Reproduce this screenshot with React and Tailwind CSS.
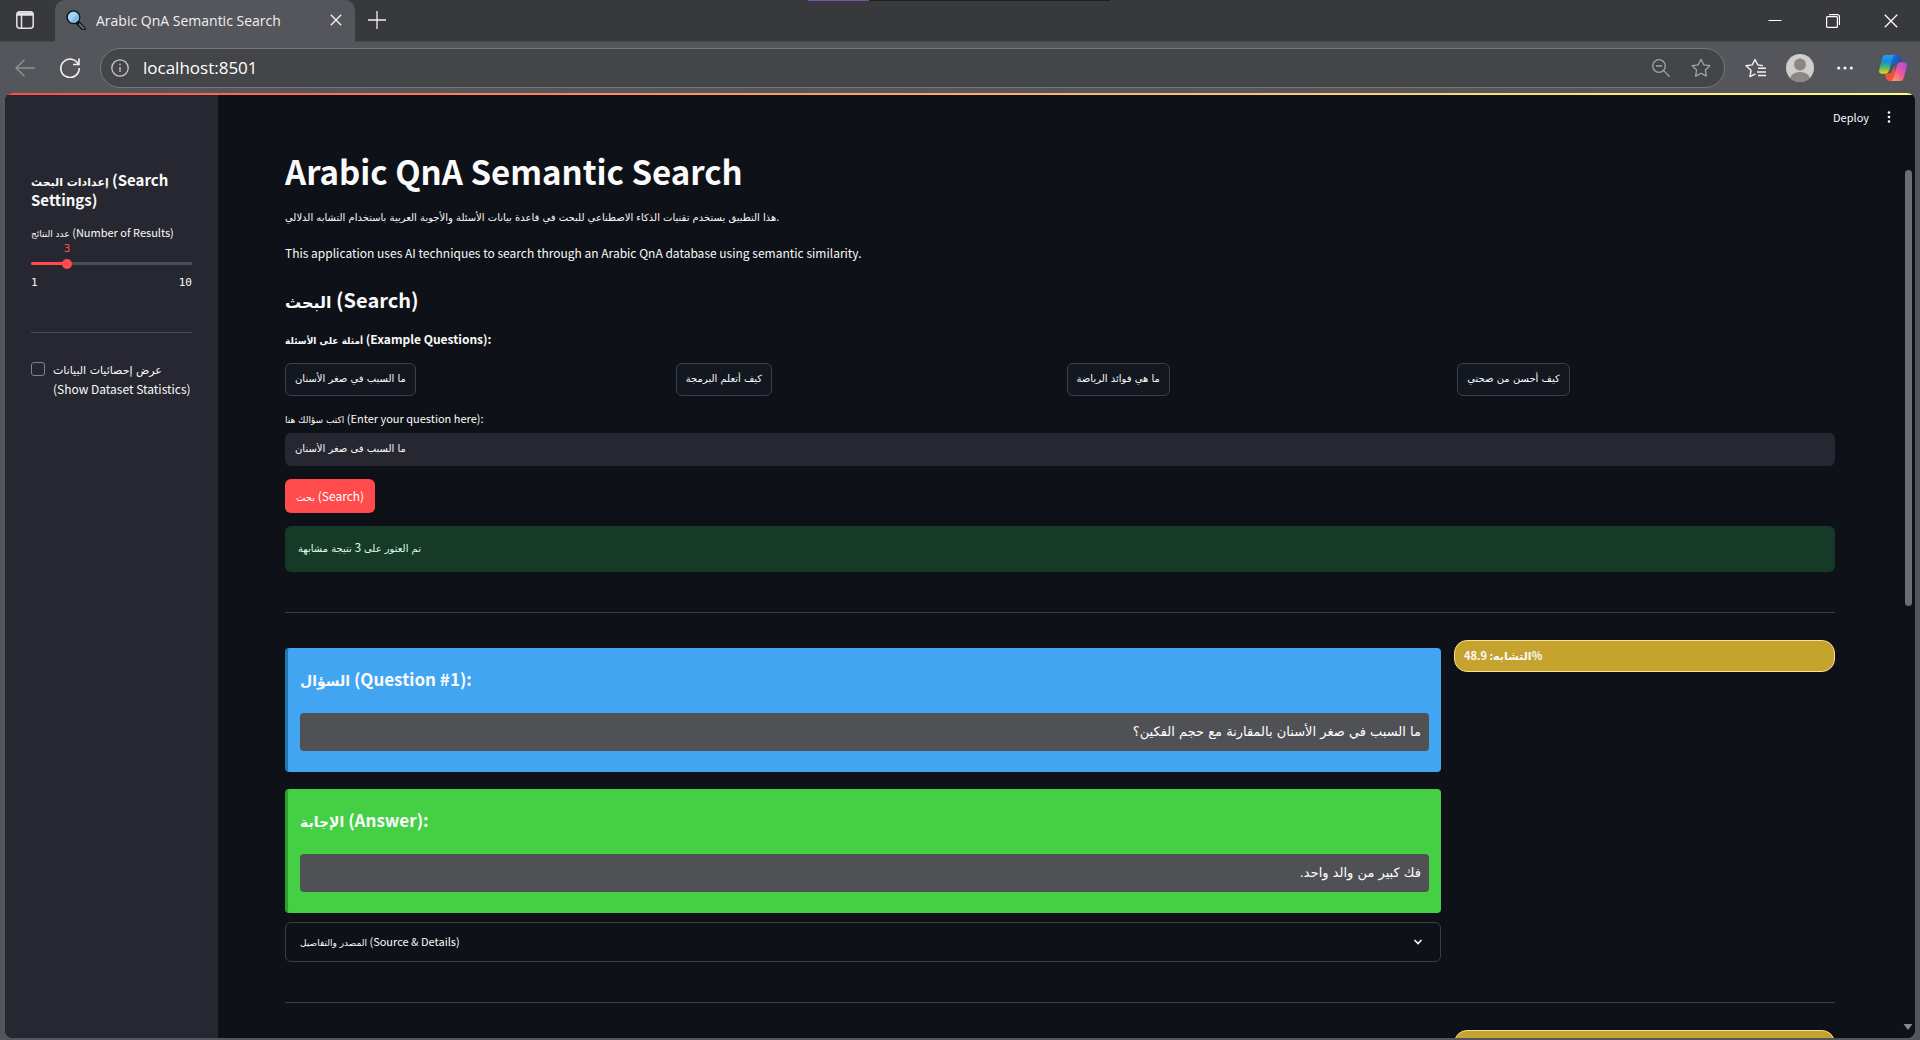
import React, { useState } from "react";

const EXAMPLES = [
  "ما السبب في صغر الأسنان",
  "كيف أتعلم البرمجة",
  "ما هي فوائد الرياضة",
  "كيف أحسن من صحتي",
];

function Ar({ size = "text-[10px]", children }) {
  return <span className={`font-['DejaVu_Sans',sans-serif] leading-none ${size}`}>{children}</span>;
}

function Magnifier() {
  return (
    <svg width="20" height="20" viewBox="0 0 20 20" fill="none" aria-hidden="true">
      <path d="M11.5 12.5l6 6" stroke="#111" strokeWidth="4.4" strokeLinecap="round" />
      <path d="M13.6 14.4l3.8 3.9" stroke="#4d6b7c" strokeWidth="2.2" strokeLinecap="round" />
      <circle cx="7.4" cy="7.2" r="6.3" fill="#9fd3f8" stroke="#111" strokeWidth="1.4" />
      <path d="M4.5 11a5 5 0 0 0 7.2-7.2z" fill="#7fbcec" />
    </svg>
  );
}

function CopilotLogo() {
  return (
    <svg width="28" height="26" viewBox="0 0 28 26" aria-hidden="true">
      <defs>
        <linearGradient id="cpA" x1="0" y1="0" x2="0" y2="1">
          <stop offset="0" stopColor="#1fa5f0" />
          <stop offset=".35" stopColor="#1989d8" />
          <stop offset=".65" stopColor="#4bb86b" />
          <stop offset="1" stopColor="#f5cf1b" />
        </linearGradient>
        <linearGradient id="cpB" x1="1" y1="0" x2="0" y2="1">
          <stop offset="0" stopColor="#a04df0" />
          <stop offset=".5" stopColor="#f0569a" />
          <stop offset="1" stopColor="#fdb04e" />
        </linearGradient>
        <linearGradient id="cpC" x1="0" y1="0" x2="1" y2="1">
          <stop offset="0" stopColor="#1c6fe0" />
          <stop offset="1" stopColor="#1440b8" />
        </linearGradient>
      </defs>
      <path d="M12 0h6c2 0 3 1.200 3.500 3l1.200 4.200h-4c-2 0-3 1-3.600 3L13 14z" fill="url(#cpC)" />
      <path d="M15.500 26h-5c-2 0-3-1.200-3.500-3l-1.200-4.400h4c2 0 3-1 3.600-3L16 11z" fill="#f4513a" />
      <path d="M6.500 0h9.800c-1.500.4-2.300 1.600-2.900 3.600L10 15.500c-.6 2-1.800 3.300-4 3.300H3c-2.600 0-3.400-1.800-2.700-4.400L3 4C3.800 1.300 4.600 0 6.500 0z" fill="url(#cpA)" />
      <path d="M21.500 26h-9.800c1.500-.4 2.300-1.600 2.900-3.600L18 10.500c.6-2 1.800-3.300 4-3.300h3c2.600 0 3.400 1.800 2.700 4.400L25 22c-.8 2.700-1.600 4-3.500 4z" fill="url(#cpB)" />
    </svg>
  );
}

const STAR = "M10 1.200l2.700 5.600 6.100.9-4.400 4.300 1 6.100L10 15.200l-5.400 2.900 1-6.100L1.200 7.700l6.100-.9z";

function TabStrip() {
  return (
    <div className="relative flex h-[42px] items-stretch bg-[#38393c] shadow-[inset_0_-1px_0_#4a4b4f]">
      <div className="absolute left-[42.1%] top-0 flex h-px w-[15.7%]">
        <span className="w-1/5 bg-[#7a4fa8]" />
        <span className="flex-1 bg-[#1f1f20]" />
      </div>
      <button aria-label="Tab actions" className="flex w-[55px] items-center justify-center pb-[2px] pr-[5px]">
        <svg width="18" height="18" viewBox="0 0 18 18" fill="none" stroke="#e4e4e4" strokeWidth="1.500" aria-hidden="true">
          <rect x=".8" y=".8" width="16.400" height="16.400" rx="3" />
          <path d="M1 3h16" strokeWidth="3.500" />
          <path d="M5.500 4v13" />
        </svg>
      </button>
      <div className="z-10 flex w-[300px] items-center rounded-t-[10px] bg-[#55565b] pb-[2px] pl-[11px] pr-[9px]">
        <Magnifier />
        <span className="ml-[10px] flex-1 whitespace-nowrap text-[14px] text-[#f0f0f0]">Arabic QnA Semantic Search</span>
        <button aria-label="Close tab" className="flex h-5 w-5 items-center justify-center">
          <svg width="12" height="12" viewBox="0 0 12 12" stroke="#f0f0f0" strokeWidth="1.400" aria-hidden="true">
            <path d="M.8.8l10.400 10.400M11.200.8L.8 11.200" />
          </svg>
        </button>
      </div>
      <button aria-label="New tab" className="flex w-[44px] items-center justify-center pb-[3px]">
        <svg width="18" height="18" viewBox="0 0 18 18" stroke="#f0f0f0" strokeWidth="1.300" aria-hidden="true">
          <path d="M9 0v18M0 9h18" />
        </svg>
      </button>
      <div className="flex-1" />
      <button aria-label="Minimize" className="flex w-[58px] items-center justify-center">
        <svg width="14" height="14" viewBox="0 0 14 14" stroke="#fff" aria-hidden="true"><path d="M.5 6.500h13" /></svg>
      </button>
      <button aria-label="Restore" className="flex w-[58px] items-center justify-center">
        <svg width="14" height="14" viewBox="0 0 14 14" fill="none" stroke="#fff" strokeWidth="1.200" aria-hidden="true">
          <rect x=".6" y="2.600" width="10.800" height="10.800" rx="1" />
          <path d="M3 .6h8.400a2 2 0 0 1 2 2V11" />
        </svg>
      </button>
      <button aria-label="Close window" className="flex w-[58px] items-center justify-center">
        <svg width="14" height="14" viewBox="0 0 14 14" stroke="#fff" strokeWidth="1.300" aria-hidden="true">
          <path d="M.8.8l12.400 12.400M13.200.8L.8 13.200" />
        </svg>
      </button>
    </div>
  );
}

function Toolbar() {
  return (
    <div className="flex h-[51px] items-center bg-[#55565b] pl-[15px] pr-[13px]">
      <button aria-label="Back" disabled>
        <svg width="20" height="18" viewBox="0 0 20 18" fill="none" stroke="#8f9094" strokeWidth="1.400" aria-hidden="true">
          <path d="M20 9H1M9.500.8L1 9l8.500 8.200" />
        </svg>
      </button>
      <button aria-label="Refresh" className="ml-[25px]">
        <svg width="20" height="20" viewBox="0 0 20 20" fill="none" stroke="#f4f4f4" strokeWidth="1.600" aria-hidden="true">
          <path d="M18.400 6.500A9.200 9.200 0 1 0 19.200 10" />
          <path d="M19 .5v6h-6" />
        </svg>
      </button>
      <div className="ml-5 flex h-10 flex-1 items-center rounded-full border border-[#77787c] bg-[#444548] pl-[10px] pr-[13px]">
        <svg width="18" height="18" viewBox="0 0 18 18" fill="none" stroke="#c9c9cb" strokeWidth="1.300" aria-hidden="true">
          <circle cx="9" cy="9" r="8.200" />
          <path d="M9 8v5M9 4.800v1.500" />
        </svg>
        <input
          aria-label="Address"
          defaultValue="localhost:8501"
          className="ml-[14px] min-w-0 flex-1 bg-transparent text-[17px] text-white outline-none"
        />
        <button aria-label="Zoom out">
          <svg width="18" height="18" viewBox="0 0 18 18" fill="none" stroke="#a3a4a7" strokeWidth="1.300" aria-hidden="true">
            <circle cx="7" cy="7" r="6.300" />
            <path d="M11.600 11.600l6 6M4 7h6" />
          </svg>
        </button>
        <button aria-label="Favourite this page" className="ml-[21px]">
          <svg width="20" height="20" viewBox="0 0 20 20" fill="none" stroke="#a3a4a7" strokeWidth="1.300" strokeLinejoin="round" aria-hidden="true">
            <path d={STAR} />
          </svg>
        </button>
      </div>
      <button aria-label="Favourites" className="ml-5">
        <svg width="21" height="20" viewBox="0 0 21 20" fill="none" stroke="#f4f4f4" strokeWidth="1.400" strokeLinejoin="round" aria-hidden="true">
          <path d="M10.500 15.800l-5.500 2.800 1-6.300L1 7.800l6.200-.9L10 1.500l2.800 5.400 5 .8" />
          <path d="M13 10.300h8M12 14h9M13 17.500h8" />
        </svg>
      </button>
      <button aria-label="Profile" className="ml-5">
        <svg width="28" height="28" viewBox="0 0 28 28" aria-hidden="true">
          <defs><clipPath id="face"><circle cx="14" cy="14" r="14" /></clipPath></defs>
          <g clipPath="url(#face)">
            <rect width="28" height="28" fill="#d0cecb" />
            <circle cx="14" cy="10.500" r="6" fill="#8b8784" />
            <ellipse cx="14" cy="25" rx="10" ry="7" fill="#8b8784" />
          </g>
        </svg>
      </button>
      <button aria-label="Settings and more" className="ml-[23px]">
        <svg width="16" height="4" viewBox="0 0 16 4" fill="#f4f4f4" aria-hidden="true">
          <circle cx="1.700" cy="2" r="1.600" /><circle cx="8" cy="2" r="1.600" /><circle cx="14.300" cy="2" r="1.600" />
        </svg>
      </button>
      <button aria-label="Copilot" className="ml-[26px]"><CopilotLogo /></button>
    </div>
  );
}

function Sidebar() {
  const [count, setCount] = useState(3);
  const share = ((count - 1) / 9) * 100;
  return (
    <aside className="w-[213px] shrink-0 bg-[#262730] px-[26px] pt-[75px]">
      <h2 className="text-[15px] font-bold leading-5 text-[#fafafa]">
        <Ar size="text-[11px]">إعدادات البحث</Ar> (Search Settings)
      </h2>
      <label htmlFor="count" className="mt-[14px] block whitespace-nowrap text-[11px] leading-4 text-[#fafafa]">
        <Ar size="text-[9px]">عدد النتائج</Ar> (Number of Results)
      </label>
      <div className="mt-px font-['DejaVu_Sans_Mono',monospace] text-[11px] leading-4 text-[#ff4b4b]">
        <output htmlFor="count" className="inline-block w-0 align-top" style={{ marginLeft: `${share}%` }}>
          <span className="-ml-[3px]">{count}</span>
        </output>
      </div>
      <div className="relative mt-[5px] h-[3px] rounded-full bg-[#4c4d57]">
        <div className="h-full rounded-full bg-[#ff4b4b]" style={{ width: `${share}%` }} />
        <input
          id="count"
          type="range"
          min="1"
          max="10"
          value={count}
          onChange={(e) => setCount(Number(e.target.value))}
          className="absolute -inset-x-[5px] -top-1 h-[11px] w-[171px] appearance-none bg-transparent [&::-webkit-slider-thumb]:h-[10px] [&::-webkit-slider-thumb]:w-[10px] [&::-webkit-slider-thumb]:appearance-none [&::-webkit-slider-thumb]:rounded-full [&::-webkit-slider-thumb]:bg-[#ff4b4b]"
        />
      </div>
      <div className="mt-[10px] flex justify-between font-['DejaVu_Sans_Mono',monospace] text-[11px] leading-4 text-[#fafafa]">
        <span>1</span>
        <span>10</span>
      </div>
      <hr className="mt-[41px] border-[#4c4d56]" />
      <div className="mt-[26px] flex items-start gap-2">
        <input id="stats" type="checkbox" className="mt-[3px] h-[14px] w-[14px] shrink-0 appearance-none rounded-[3px] border border-[#82838c]" />
        <label htmlFor="stats" className="whitespace-nowrap text-[12px] leading-5 text-[#fafafa]">
          <Ar size="text-[11px]">عرض إحصائيات البيانات</Ar>
          <br />
          (Show Dataset Statistics)
        </label>
      </div>
    </aside>
  );
}

function ResultCard({ title, tail, body, card }) {
  return (
    <section className={`rounded-[4px] border-l-[3px] px-3 pb-[21px] pt-[19px] ${card}`}>
      <h3 className="whitespace-nowrap text-[17px] font-bold leading-6 text-[#fafafa]">
        <Ar size="text-[14px]">{title}</Ar> {tail}
      </h3>
      <p dir="rtl" className="mt-[22px] rounded-[4px] bg-[#505155] p-2 font-['DejaVu_Sans',sans-serif] text-[13px] leading-[22px] text-white">
        {body}
      </p>
    </section>
  );
}

function Badge() {
  return (
    <div dir="ltr" className="h-8 rounded-[13px] border border-[#f7e08c] bg-[#c6a22f] px-[9px] text-[11px] font-bold leading-[28px] text-[#fafafa]">
      التشابه: 48.9%
    </div>
  );
}

function Results() {
  return (
    <div className="mt-[27px] grid grid-cols-[1156fr_381fr] gap-[13px]">
      <div className="flex flex-col pt-2">
        <ResultCard
          title="السؤال"
          tail="(Question #1):"
          body="ما السبب في صغر الأسنان بالمقارنة مع حجم الفكين؟"
          card="border-[#1f77b4] bg-[#42a5f1]"
        />
        <div className="h-[17px]" />
        <ResultCard
          title="الإجابة"
          tail="(Answer):"
          body="فك كبير من والد واحد."
          card="border-[#2ca02c] bg-[#45cf45]"
        />
        <button className="mt-[9px] flex h-10 w-full items-center justify-between rounded-[6px] border border-[#3b3d44] px-[14px] pb-px text-[11px] text-[#fafafa]">
          <span>
            <Ar size="text-[9px]">المصدر والتفاصيل</Ar> (Source &amp; Details)
          </span>
          <svg width="16" height="8" viewBox="0 0 16 8" fill="none" stroke="#fafafa" strokeWidth="1.600" aria-hidden="true">
            <path d="M4.500 2L8 5.500 11.500 2" />
          </svg>
        </button>
      </div>
      <Badge />
    </div>
  );
}

function Main() {
  const [query, setQuery] = useState(EXAMPLES[0]);
  return (
    <main className="relative min-w-0 flex-1 overflow-hidden bg-[#0e1117] text-[#fafafa]">
      <header className="flex h-11 items-center justify-end gap-[18px] pr-6 text-[11px]">
        <button>Deploy</button>
        <button aria-label="Menu">
          <svg width="4" height="12" viewBox="0 0 4 12" fill="#fafafa" aria-hidden="true">
            <circle cx="2" cy="1.500" r="1.300" /><circle cx="2" cy="6" r="1.300" /><circle cx="2" cy="10.500" r="1.300" />
          </svg>
        </button>
      </header>
      <div className="pl-[67px] pr-20 pt-[11px]">
        <h1 className="text-[33px] font-bold leading-[42px]">Arabic QnA Semantic Search</h1>
        <p className="mt-4 font-['DejaVu_Sans',sans-serif] text-[10px] leading-5">
          هذا التطبيق يستخدم تقنيات الذكاء الاصطناعي للبحث في قاعدة بيانات الأسئلة والأجوبة العربية باستخدام التشابه الدلالي.
        </p>
        <p className="mt-[15px] text-[12px] leading-5">
          This application uses AI techniques to search through an Arabic QnA database using semantic similarity.
        </p>
        <h2 className="mt-[23px] text-[20px] font-bold leading-7">
          <Ar size="text-[16px]">البحث</Ar> (Search)
        </h2>
        <p className="mt-[15px] text-[12px] font-bold leading-5">
          <Ar size="text-[9px]">أمثلة على الأسئلة</Ar> (Example Questions):
        </p>
        <div className="mt-[14px] grid grid-cols-4 gap-[13px]">
          {EXAMPLES.map((text) => (
            <div key={text}>
              <button
                onClick={() => setQuery(text)}
                className="block h-[33px] rounded-[6px] border border-[#3e4047] bg-[#131720] px-[9px] pb-[2px] font-['DejaVu_Sans',sans-serif] text-[10px]"
              >
                {text}
              </button>
            </div>
          ))}
        </div>
        <label htmlFor="query" className="mt-[14px] block text-[11px] leading-4">
          <Ar size="text-[9px]">اكتب سؤالك هنا</Ar> (Enter your question here):
        </label>
        <input
          id="query"
          value={query}
          onChange={(e) => setQuery(e.target.value)}
          className="mt-[7px] block h-[33px] w-full rounded-[6px] bg-[#262730] px-[10px] pb-[3px] font-['DejaVu_Sans',sans-serif] text-[10px] outline-none"
        />
        <button className="mt-[13px] block h-[34px] rounded-[6px] bg-[#ff4b4b] px-[11px] text-[12px] text-white">
          <Ar>بحث</Ar> (Search)
        </button>
        <div role="status" className="mt-[13px] h-[46px] rounded-[6px] bg-[#173928] px-[13px] text-[12px] leading-[42px] text-[#dffde9]">
          <Ar>تم العثور على</Ar> 3 <Ar>نتيجة مشابهة</Ar>
        </div>
        <hr className="mt-10 border-[#3b3d44]" />
        <Results />
        <hr className="mt-10 border-[#3b3d44]" />
        <div className="mt-[27px] grid grid-cols-[1156fr_381fr] gap-[13px]">
          <div />
          <div className="h-8 rounded-[13px] border border-[#f7e08c] bg-[#c6a22f]" />
        </div>
      </div>
      <div className="absolute right-[3px] top-[75px] h-[436px] w-[7px] rounded-full bg-[#6c6d70]" />
      <svg className="absolute bottom-2 right-[2px]" width="10" height="6" viewBox="0 0 10 6" aria-hidden="true">
        <path d="M.5 0h9L5 6z" fill="#87888b" />
      </svg>
    </main>
  );
}

export default function App() {
  return (
    <div className="flex h-screen flex-col overflow-hidden bg-[#55565b] font-['Open_Sans',sans-serif]">
      <TabStrip />
      <Toolbar />
      <div className="mx-[5px] mb-[2px] flex min-h-0 flex-1 flex-col overflow-hidden rounded-[8px] bg-[#0e1117] font-['Noto_Sans_CJK_SC','DejaVu_Sans',sans-serif]">
        <div className="h-[2px] shrink-0 bg-gradient-to-r from-[#ff4b4b] to-[#fffd80]" />
        <div className="flex min-h-0 flex-1">
          <Sidebar />
          <Main />
        </div>
      </div>
    </div>
  );
}
